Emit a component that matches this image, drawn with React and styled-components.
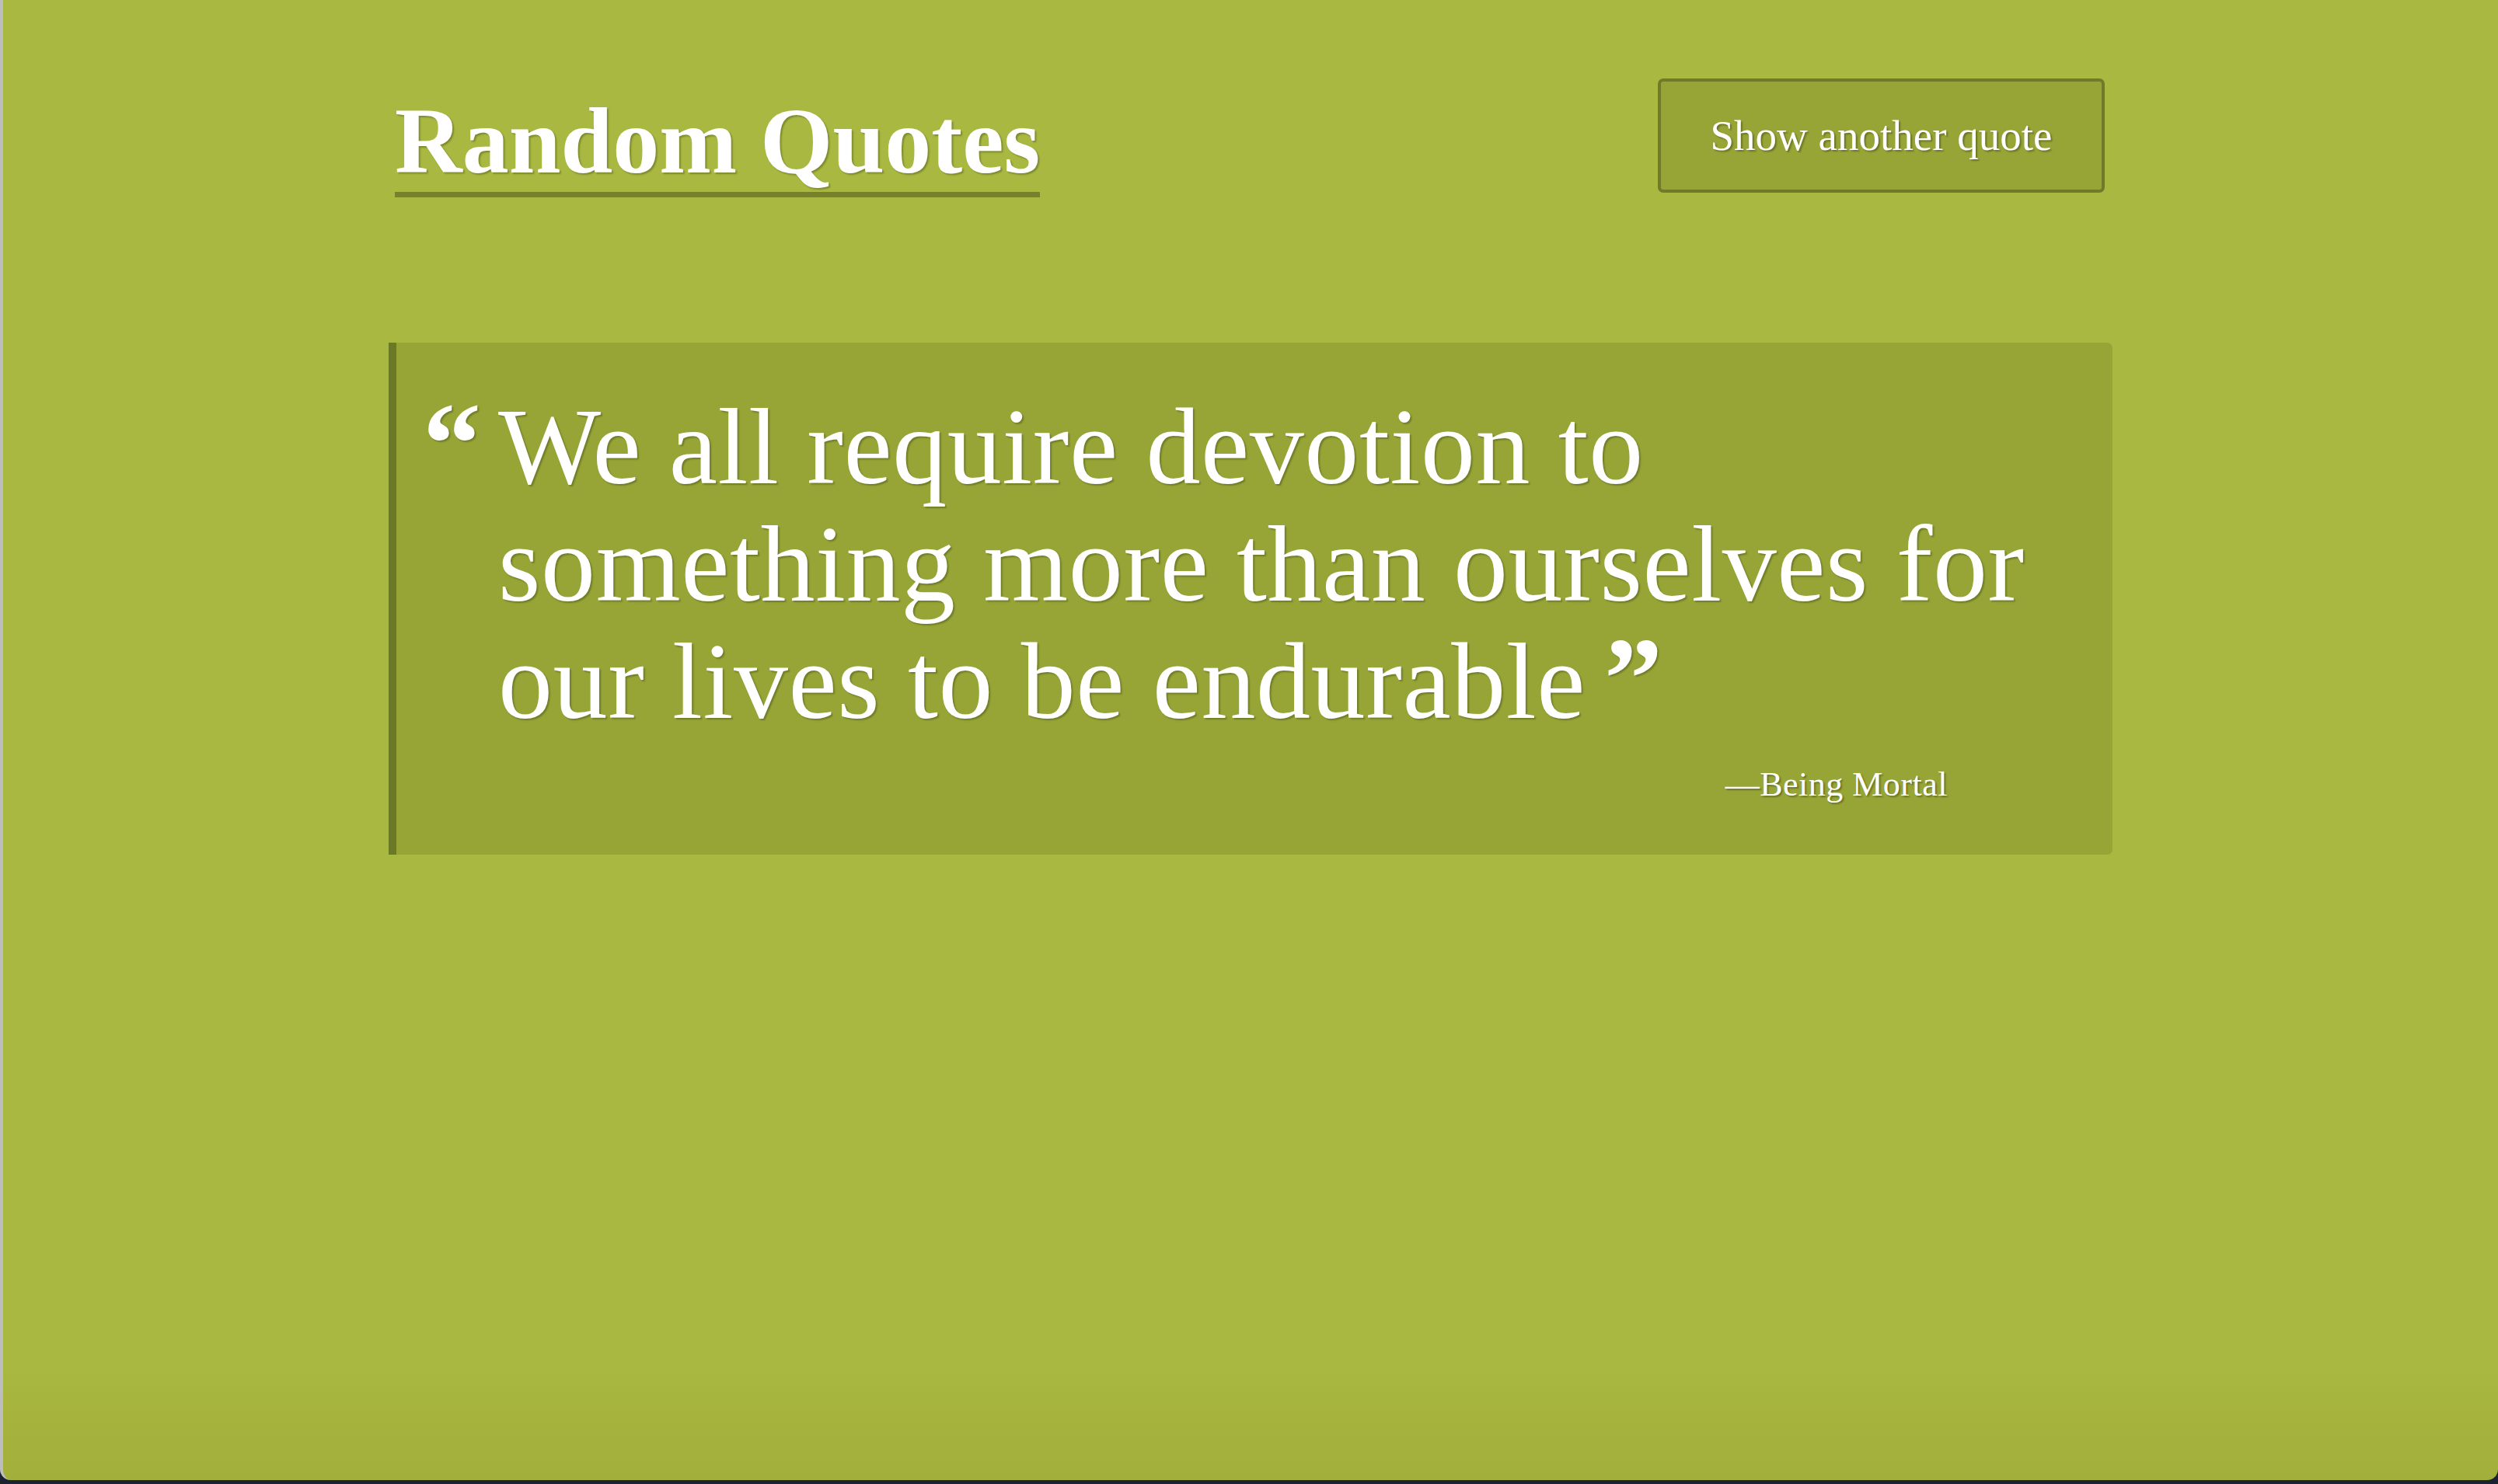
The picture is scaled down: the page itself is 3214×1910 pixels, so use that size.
import React, { useState } from 'react'
import styled, { createGlobalStyle } from 'styled-components'

const GlobalStyle = createGlobalStyle`
    html, body {
        margin: 0;
        padding: 0;
        background: #1b2330;
    }
`;

const quotes = [
    { text: 'We all require devotion to something more than ourselves for our lives to be endurable', source: 'Being Mortal' },
]

const App = () => {
    const [index, setIndex] = useState(0)

    const next = () => {
        setIndex((index + 1) % quotes.length)
    }

    const quote = quotes[index]

    return (
        <>
            <GlobalStyle />
            <Window>
                <Container>
                    <Header>
                        <Title>Random Quotes</Title>
                        <Button onClick={next}>Show another quote</Button>
                    </Header>
                    <Card>
                        <QuoteText>
                            <Mark>“</Mark>{quote.text}<Mark closing>”</Mark>
                        </QuoteText>
                        <Source>—{quote.source}</Source>
                    </Card>
                </Container>
            </Window>
        </>
    )
}

export default App


const Window = styled.div`
    height: 1905px;
    box-sizing: border-box;
    border-left: 4px solid #bdbdbd;
    border-radius: 0 0 14px 14px;
    background: linear-gradient(to bottom, #a9b840 0%, #a9b840 92%, #a2af3b 100%);
    overflow: hidden;
`;

const Container = styled.div`
    width: 2218px;
    margin: 0 auto;
`;

const Header = styled.header`
    display: flex;
    align-items: flex-start;
    justify-content: space-between;
    padding: 101px 10px 0 8px;
    margin-bottom: 187px;
`;

const Title = styled.h1`
    margin: 21px 0 0;
    padding-bottom: 5px;
    border-bottom: 7px solid #76802f;
    font-family: "Liberation Serif", "Times New Roman", serif;
    font-weight: 700;
    font-size: 120px;
    line-height: 120px;
    color: #fff;
    text-shadow: 2px 2px 2px rgba(0, 0, 0, 0.25);
`;

const Button = styled.button`
    width: 575px;
    height: 147px;
    background: #97a536;
    border: 4px solid #6f7b29;
    border-radius: 7px;
    color: #fff;
    font-family: "Liberation Serif", "Times New Roman", serif;
    font-size: 55px;
    text-shadow: 2px 2px 2px rgba(0, 0, 0, 0.3);
    cursor: pointer;
`;

const Card = styled.blockquote`
    margin: 0;
    background: #97a536;
    border-left: 10px solid #6b7826;
    border-radius: 0 7px 7px 0;
    padding: 58px 66px 64px 131px;
`;

const QuoteText = styled.p`
    margin: 0;
    text-indent: -97px;
    font-family: "Liberation Serif", "Times New Roman", serif;
    font-size: 140px;
    line-height: 151px;
    letter-spacing: 0.6px;
    color: #fff;
    text-shadow: 2px 2px 2px rgba(0, 0, 0, 0.25);
`;

const Mark = styled.span`
    font-weight: 700;
    font-size: 150px;
    line-height: 0;
    letter-spacing: 0;
    margin-right: ${p => (p.closing ? '0' : '22px')};
    margin-left: ${p => (p.closing ? '24px' : '0')};
`;

const Source = styled.footer`
    margin: 31px 146px 0 0;
    text-align: right;
    font-family: "Liberation Serif", "Times New Roman", serif;
    font-size: 44px;
    line-height: 53px;
    letter-spacing: 0.5px;
    color: #fff;
    text-shadow: 2px 2px 2px rgba(0, 0, 0, 0.3);
`;
